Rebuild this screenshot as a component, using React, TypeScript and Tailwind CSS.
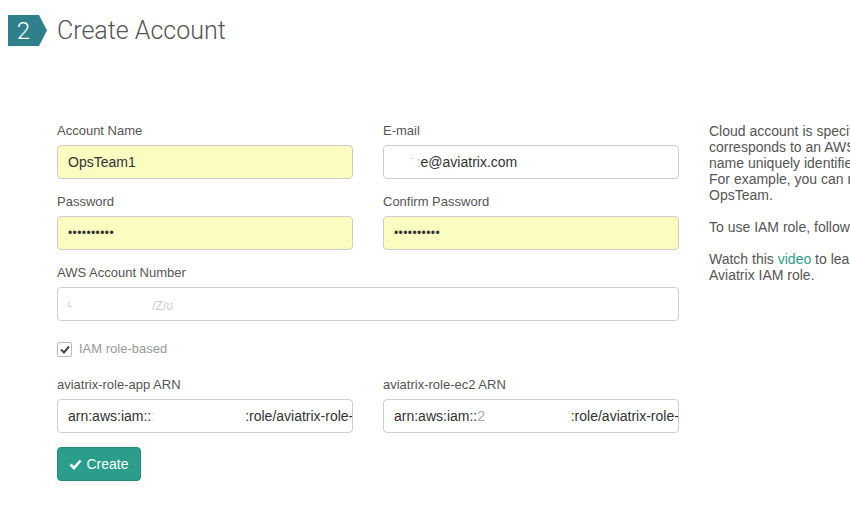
import React from "react"

const font = { fontFamily: '"Liberation Sans", Arial, sans-serif' }

function Field({
  label,
  children,
  filled = false,
}: {
  label: string
  children: React.ReactNode
  filled?: boolean
}) {
  return (
    <div className="mb-[15px]">
      <div className="text-[13px] leading-4 text-[#555] mb-[6px]">{label}</div>
      <div
        className={`h-[34px] rounded-[4px] border border-[#ccc] px-[10px] flex items-center overflow-hidden whitespace-nowrap text-[14px] text-[#333] ${
          filled ? "bg-[#fafcc0]" : "bg-white"
        }`}
      >
        {children}
      </div>
    </div>
  )
}

const Dots = () => <span className="text-[12px] tracking-[0.4px]">••••••••••</span>

export default function App() {
  return (
    <div className="w-[850px] h-[509px] bg-white overflow-hidden relative" style={font}>
      {/* Step header */}
      <div className="flex items-center pl-[8px] pt-[15px]">
        <svg width="40" height="31" viewBox="0 0 40 31">
          <polygon points="0,0 31,0 39,15.5 31,31 0,31" fill="#2f7f8c" />
          <text
            x="15.5"
            y="24"
            textAnchor="middle"
            fill="#fff"
            fontSize="24"
            fontFamily="Roboto, sans-serif"
            fontWeight="300"
          >
            2
          </text>
        </svg>
        <h1
          className="ml-[9px] text-[25px] font-light text-[#555] leading-none"
          style={{ fontFamily: "Roboto, sans-serif" }}
        >
          Create Account
        </h1>
      </div>

      <div className="flex pl-[57px] pt-[77px]">
        {/* Form */}
        <div className="w-[622px] shrink-0">
          <div className="grid grid-cols-2 gap-x-[30px]">
            <Field label="Account Name" filled>
              OpsTeam1
            </Field>
            <Field label="E-mail">
              <span className="pl-[16px] text-[#bbb] text-[11px]">¨</span>
              <span className="pl-[3px] text-[#bbb]">:</span>
              <span>e@aviatrix.com</span>
            </Field>
            <Field label="Password" filled>
              <Dots />
            </Field>
            <Field label="Confirm Password" filled>
              <Dots />
            </Field>
          </div>

          <Field label="AWS Account Number">
            <span className="text-[#ccc] text-[12px] pt-[4px]">ᴸ</span>
            <span className="pl-[80px] text-[#ccc] text-[12px] pt-[4px]">/Z/ʊ</span>
          </Field>

          <div className="pt-[5px] pb-[20px]">
            <label className="flex items-center h-4">
              <span className="w-[15px] h-[15px] border border-[#bbb] rounded-[2px] flex items-center justify-center bg-white">
                <svg width="10" height="9" viewBox="0 0 10 9">
                  <path d="M1 4.5 L4 7.5 L9 1.5" fill="none" stroke="#444" strokeWidth="2" />
                </svg>
              </span>
              <span className="ml-[7px] text-[13px] text-[#999]">IAM role-based</span>
            </label>
          </div>

          <div className="grid grid-cols-2 gap-x-[30px]">
            <Field label="aviatrix-role-app ARN">
              <span>arn:aws:iam::</span>
              <span className="text-[#ddd]">:</span>
              <span className="pl-[90px]">:role/aviatrix-role-app</span>
            </Field>
            <Field label="aviatrix-role-ec2 ARN">
              <span>arn:aws:iam::</span>
              <span className="text-[#aaa]">2</span>
              <span className="pl-[82px] text-[#ddd]">'</span>
              <span className="pl-[1px]">:role/aviatrix-role-ec2</span>
            </Field>
          </div>

          <button className="-mt-[1px] h-[34px] w-[84px] rounded-[4px] bg-[#2a9d8b] border border-[#258c7c] text-white text-[14px] flex items-center justify-center gap-[4px]">
            <svg width="13" height="11" viewBox="0 0 13 11">
              <path d="M1.5 5.5 L5 9 L11.5 1.5" fill="none" stroke="#fff" strokeWidth="2.6" />
            </svg>
            Create
          </button>
        </div>

        {/* Help text */}
        <div className="ml-[30px] w-[320px] shrink-0 text-[14px] leading-4 text-[#555] whitespace-nowrap">
          <p>Cloud account is specific to each cloud provider.</p>
          <p>corresponds to an AWS account. The account</p>
          <p>name uniquely identifies the cloud credentials.</p>
          <p>For example, you can name the account</p>
          <p>OpsTeam.</p>
          <p className="mt-4">To use IAM role, follow the instructions.</p>
          <p className="mt-4">
            Watch this <span className="text-[#2a9d8b]">video</span> to learn how to set up
          </p>
          <p>Aviatrix IAM role.</p>
        </div>
      </div>
    </div>
  )
}
